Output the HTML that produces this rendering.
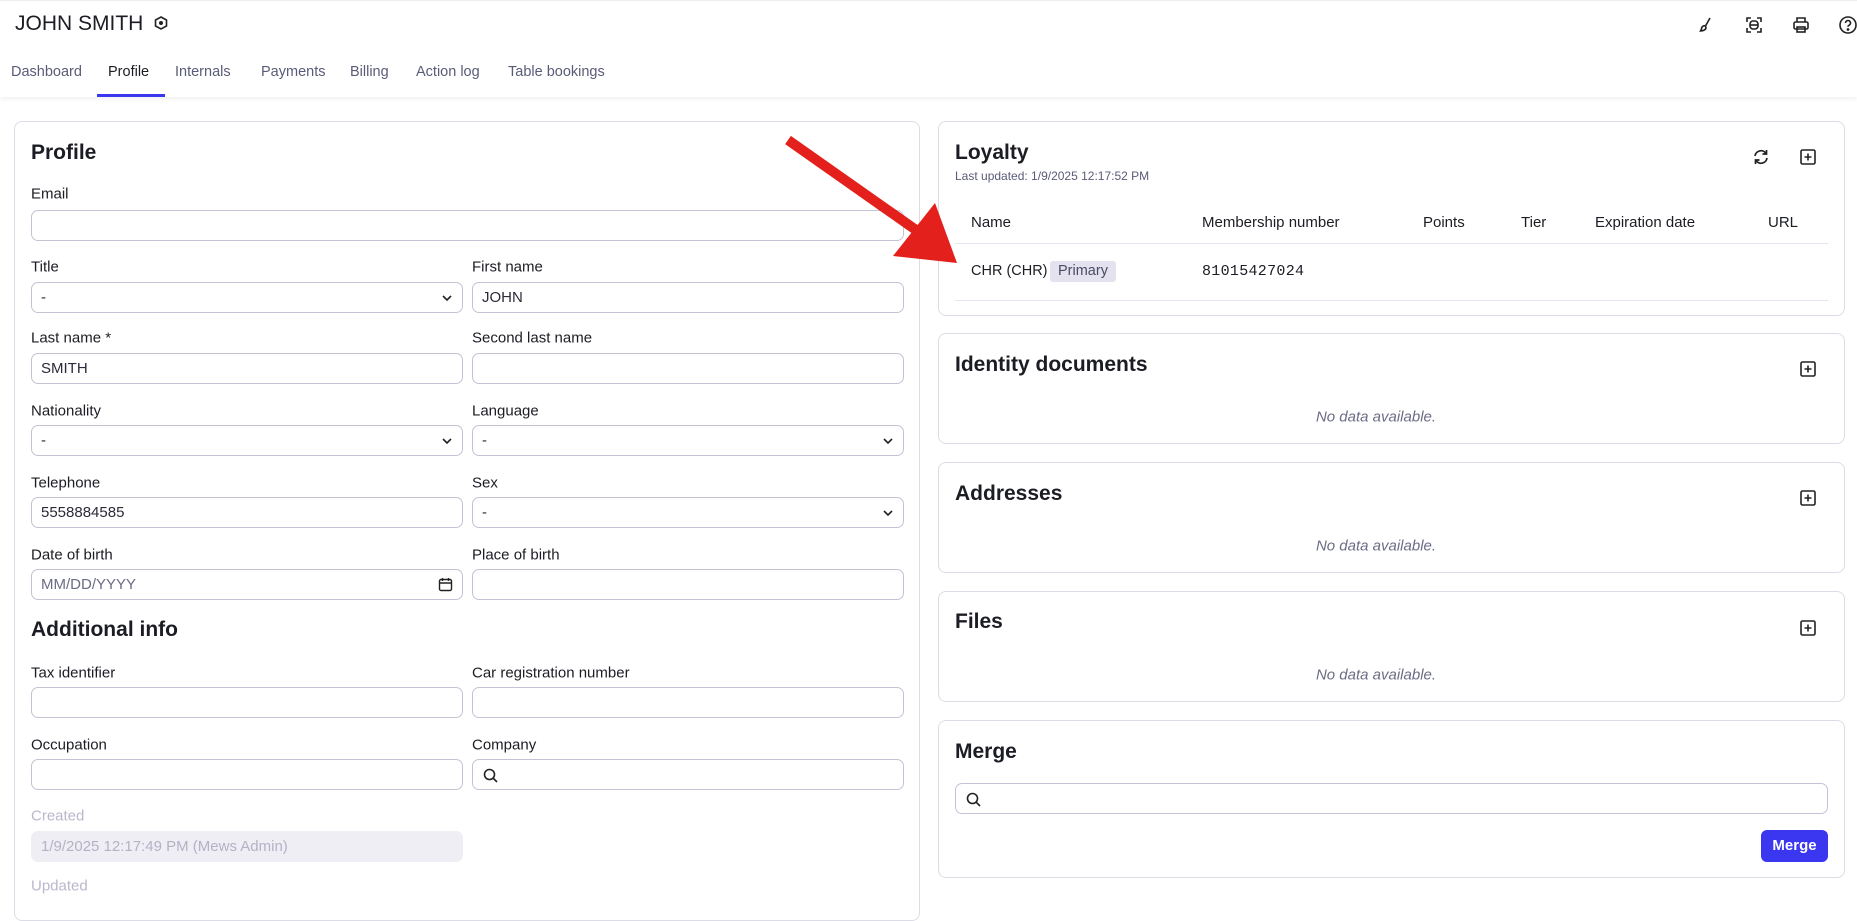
<!DOCTYPE html>
<html><head><meta charset="utf-8"><style>
*{box-sizing:border-box;margin:0;padding:0}
body{width:1857px;height:893px;overflow:hidden;background:#fff;font-family:"Liberation Sans",sans-serif;color:#1c1d24;position:relative}
.a{position:absolute;white-space:nowrap}
.hdr{position:absolute;left:0;top:0;width:1857px;height:97px;background:#fff;box-shadow:0 2px 4px rgba(0,0,0,.06);border-top:1px solid #eee}
.tab{position:absolute;top:64px;font-size:14.5px;color:#5a5b78}
.card{position:absolute;border:1px solid #dcdce6;border-radius:8px;background:#fff}
.lbl{position:absolute;font-size:15px;color:#1c1d24;transform:translateY(-50%)}
.inp{position:absolute;height:31px;border:1px solid #c4c3d6;border-radius:7px;background:#fff;font-size:15px;padding-left:9px;line-height:29px;color:#2a2b38}
.h2{position:absolute;font-size:21px;font-weight:bold;color:#1c1d24;transform:translateY(-50%)}
.chev{position:absolute;right:9px;top:9px}
.nd{position:absolute;font-size:15px;font-style:italic;color:#6b6c85;transform:translate(-50%,-50%)}
.th{position:absolute;top:214px;font-size:15px;color:#1c1d24}
</style></head><body>
<div class="hdr"></div>
<div class="a" style="left:15px;top:12px;font-size:21px;color:#1c1d24">JOHN SMITH</div>
<svg class="a" style="left:154px;top:16px" width="14" height="14" viewBox="0 0 14 14"><path d="M7 1L12.5 4v6L7 13 1.5 10V4z" fill="none" stroke="#222" stroke-width="1.6"/><circle cx="7" cy="7" r="2" fill="#222"/></svg>
<svg class="a" style="left:1697px;top:16px" width="18" height="18" viewBox="0 0 18 18" fill="none" stroke="#222" stroke-width="1.6"><path d="M13 2L8.5 10"/><path d="M8.5 10c-2-1-4 1-4 3l-1 2c2 0 5-1 5.5-3z"/></svg>
<svg class="a" style="left:1745px;top:16px" width="18" height="18" viewBox="0 0 18 18" fill="none" stroke="#222" stroke-width="1.6"><path d="M2 6V2h4M12 2h4v4M16 12v4h-4M6 16H2v-4"/><rect x="5" y="5" width="8" height="8" rx="3"/><path d="M5 9h8"/></svg>
<svg class="a" style="left:1792px;top:16px" width="18" height="18" viewBox="0 0 18 18" fill="none" stroke="#222" stroke-width="1.6"><path d="M5 6V2h8v4"/><rect x="2" y="6" width="14" height="7" rx="1.5"/><rect x="5" y="11" width="8" height="5"/></svg>
<svg class="a" style="left:1838px;top:15px" width="20" height="20" viewBox="0 0 20 20" fill="none" stroke="#222" stroke-width="1.6"><circle cx="10" cy="10" r="8"/><path d="M7.5 8a2.5 2.5 0 1 1 3.5 2.3c-.7.3-1 .8-1 1.5"/><circle cx="10" cy="14.5" r=".6" fill="#222"/></svg>
<div class="tab" style="left:11px">Dashboard</div>
<div class="tab" style="left:108px;color:#1c1d24">Profile</div>
<div class="tab" style="left:175px">Internals</div>
<div class="tab" style="left:261px">Payments</div>
<div class="tab" style="left:350px">Billing</div>
<div class="tab" style="left:416px">Action log</div>
<div class="tab" style="left:508px">Table bookings</div>
<div class="a" style="left:97px;top:94px;width:68px;height:3px;background:#3b36f0"></div>

<div class="card" style="left:14px;top:121px;width:906px;height:800px"></div>
<div class="h2" style="left:31px;top:153px">Profile</div>
<div class="lbl" style="left:31px;top:194px">Email</div>
<div class="inp" style="left:31px;top:210px;width:873px"></div>

<div class="lbl" style="left:31px;top:267px">Title</div>
<div class="inp" style="left:31px;top:282px;width:432px">-<svg class="chev" width="12" height="12" viewBox="0 0 12 12"><path d="M2 4l4 4 4-4" fill="none" stroke="#222" stroke-width="1.6"/></svg></div>
<div class="lbl" style="left:472px;top:267px">First name</div>
<div class="inp" style="left:472px;top:282px;width:432px">JOHN</div>

<div class="lbl" style="left:31px;top:338px">Last name *</div>
<div class="inp" style="left:31px;top:353px;width:432px">SMITH</div>
<div class="lbl" style="left:472px;top:338px">Second last name</div>
<div class="inp" style="left:472px;top:353px;width:432px"></div>

<div class="lbl" style="left:31px;top:411px">Nationality</div>
<div class="inp" style="left:31px;top:425px;width:432px">-<svg class="chev" width="12" height="12" viewBox="0 0 12 12"><path d="M2 4l4 4 4-4" fill="none" stroke="#222" stroke-width="1.6"/></svg></div>
<div class="lbl" style="left:472px;top:411px">Language</div>
<div class="inp" style="left:472px;top:425px;width:432px">-<svg class="chev" width="12" height="12" viewBox="0 0 12 12"><path d="M2 4l4 4 4-4" fill="none" stroke="#222" stroke-width="1.6"/></svg></div>

<div class="lbl" style="left:31px;top:483px">Telephone</div>
<div class="inp" style="left:31px;top:497px;width:432px">5558884585</div>
<div class="lbl" style="left:472px;top:483px">Sex</div>
<div class="inp" style="left:472px;top:497px;width:432px">-<svg class="chev" width="12" height="12" viewBox="0 0 12 12"><path d="M2 4l4 4 4-4" fill="none" stroke="#222" stroke-width="1.6"/></svg></div>

<div class="lbl" style="left:31px;top:555px">Date of birth</div>
<div class="inp" style="left:31px;top:569px;width:432px;color:#6b6c85">MM/DD/YYYY<svg class="chev" style="top:7px" width="15" height="15" viewBox="0 0 15 15" fill="none" stroke="#222" stroke-width="1.4"><rect x="1.5" y="2.5" width="12" height="11" rx="1.5"/><path d="M1.5 6h12M4.5 1v3M10.5 1v3"/></svg></div>
<div class="lbl" style="left:472px;top:555px">Place of birth</div>
<div class="inp" style="left:472px;top:569px;width:432px"></div>

<div class="h2" style="left:31px;top:630px">Additional info</div>
<div class="lbl" style="left:31px;top:673px">Tax identifier</div>
<div class="inp" style="left:31px;top:687px;width:432px"></div>
<div class="lbl" style="left:472px;top:673px">Car registration number</div>
<div class="inp" style="left:472px;top:687px;width:432px"></div>

<div class="lbl" style="left:31px;top:745px">Occupation</div>
<div class="inp" style="left:31px;top:759px;width:432px"></div>
<div class="lbl" style="left:472px;top:745px">Company</div>
<div class="inp" style="left:472px;top:759px;width:432px"><svg style="position:absolute;left:10px;top:8px" width="15" height="15" viewBox="0 0 15 15" fill="none" stroke="#222" stroke-width="1.6"><circle cx="6.5" cy="6.5" r="5"/><path d="M10 10l4 4"/></svg></div>

<div class="lbl" style="left:31px;top:816px;color:#b9b8cc">Created</div>
<div class="inp" style="left:31px;top:831px;width:432px;background:#efeef4;border-color:#efeef4;color:#b3b2c6">1/9/2025 12:17:49 PM (Mews Admin)</div>
<div class="lbl" style="left:31px;top:886px;color:#b9b8cc">Updated</div>

<!-- Loyalty -->
<div class="card" style="left:938px;top:121px;width:907px;height:195px"></div>
<div class="h2" style="left:955px;top:153px">Loyalty</div>
<div class="a" style="left:955px;top:169px;font-size:12px;color:#5a5b78">Last updated: 1/9/2025 12:17:52 PM</div>
<svg class="a" style="left:1752px;top:148px" width="18" height="18" viewBox="0 0 18 18" fill="none" stroke="#222" stroke-width="1.7"><path d="M3 8a6 6 0 0 1 11-2.5M15 10a6 6 0 0 1-11 2.5"/><path d="M14.5 2v4h-4M3.5 16v-4h4"/></svg>
<svg class="a" style="left:1800px;top:149px" width="16" height="16" viewBox="0 0 16 16" fill="none" stroke="#222" stroke-width="1.6"><rect x="1" y="1" width="14" height="14" rx="1.5"/><path d="M8 4.5v7M4.5 8h7"/></svg>
<div class="th" style="left:971px">Name</div>
<div class="th" style="left:1202px">Membership number</div>
<div class="th" style="left:1423px">Points</div>
<div class="th" style="left:1521px">Tier</div>
<div class="th" style="left:1595px">Expiration date</div>
<div class="th" style="left:1768px">URL</div>
<div class="a" style="left:955px;top:243px;width:873px;height:1px;background:#e6e6ee"></div>
<div class="a" style="left:971px;top:263px;font-size:14.5px">CHR (CHR)</div>
<div class="a" style="left:1050px;top:261px;height:21px;padding:0 8px;line-height:21px;background:#e3e2ee;border-radius:3px;font-size:14.5px;color:#4a4b66">Primary</div>
<div class="a" style="left:1202px;top:263px;font-size:15px;font-family:'Liberation Mono',monospace;letter-spacing:.3px">81015427024</div>
<div class="a" style="left:955px;top:300px;width:873px;height:1px;background:#e6e6ee"></div>

<!-- Identity -->
<div class="card" style="left:938px;top:333px;width:907px;height:111px"></div>
<div class="h2" style="left:955px;top:365px">Identity documents</div>
<svg class="a" style="left:1800px;top:361px" width="16" height="16" viewBox="0 0 16 16" fill="none" stroke="#222" stroke-width="1.6"><rect x="1" y="1" width="14" height="14" rx="1.5"/><path d="M8 4.5v7M4.5 8h7"/></svg>
<div class="nd" style="left:1376px;top:417px">No data available.</div>

<div class="card" style="left:938px;top:462px;width:907px;height:111px"></div>
<div class="h2" style="left:955px;top:494px">Addresses</div>
<svg class="a" style="left:1800px;top:490px" width="16" height="16" viewBox="0 0 16 16" fill="none" stroke="#222" stroke-width="1.6"><rect x="1" y="1" width="14" height="14" rx="1.5"/><path d="M8 4.5v7M4.5 8h7"/></svg>
<div class="nd" style="left:1376px;top:546px">No data available.</div>

<div class="card" style="left:938px;top:591px;width:907px;height:111px"></div>
<div class="h2" style="left:955px;top:622px">Files</div>
<svg class="a" style="left:1800px;top:620px" width="16" height="16" viewBox="0 0 16 16" fill="none" stroke="#222" stroke-width="1.6"><rect x="1" y="1" width="14" height="14" rx="1.5"/><path d="M8 4.5v7M4.5 8h7"/></svg>
<div class="nd" style="left:1376px;top:675px">No data available.</div>

<div class="card" style="left:938px;top:720px;width:907px;height:158px"></div>
<div class="h2" style="left:955px;top:752px">Merge</div>
<div class="inp" style="left:955px;top:783px;width:873px"><svg style="position:absolute;left:10px;top:8px" width="15" height="15" viewBox="0 0 15 15" fill="none" stroke="#222" stroke-width="1.6"><circle cx="6.5" cy="6.5" r="5"/><path d="M10 10l4 4"/></svg></div>
<div class="a" style="left:1761px;top:830px;width:67px;height:32px;background:#3b36f0;border-radius:6px;color:#fff;font-size:15px;font-weight:bold;text-align:center;line-height:32px">Merge</div>

<svg class="a" style="left:0;top:0" width="1857" height="893" viewBox="0 0 1857 893"><line x1="788" y1="140" x2="916" y2="230" stroke="#e3201b" stroke-width="10"/><polygon points="957,263 893,256 935,203" fill="#e3201b"/></svg>
</body></html>
